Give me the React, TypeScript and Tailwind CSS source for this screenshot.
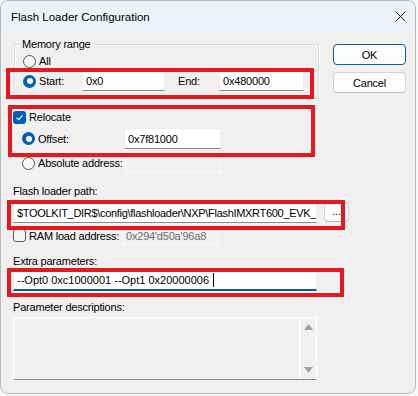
import React from "react";

const font = { fontFamily: '"Liberation Sans", Arial, sans-serif' };

function Radio({ checked }: { checked?: boolean }) {
  return checked ? (
    <span className="w-[13px] h-[13px] rounded-full bg-[#005fb8] flex items-center justify-center shrink-0">
      <span className="w-[6px] h-[6px] rounded-full bg-white" />
    </span>
  ) : (
    <span className="w-[13px] h-[13px] rounded-full border border-[#5a5a5a] bg-[#f6f6f6] shrink-0" />
  );
}

function Check({ checked }: { checked?: boolean }) {
  return checked ? (
    <span className="w-[13px] h-[13px] rounded-[3px] bg-[#005fb8] flex items-center justify-center shrink-0">
      <svg width="9" height="9" viewBox="0 0 9 9">
        <path d="M1.5 4.6 L3.6 6.7 L7.6 2.3" stroke="white" strokeWidth="1.1" fill="none" />
      </svg>
    </span>
  ) : (
    <span className="w-[13px] h-[13px] rounded-[3px] border border-[#5a5a5a] bg-[#f6f6f6] shrink-0" />
  );
}

function Input({ value, className, focused }: { value: string; className: string; focused?: boolean }) {
  return (
    <div
      className={
        "bg-white flex items-center pl-[3px] text-black border border-[#ececec] overflow-hidden " +
        (focused ? "border-b-2 border-b-[#005fb8] " : "border-b-[#8a8a8a] ") +
        className
      }
    >
      <span className="whitespace-nowrap">{value}</span>
      {focused && <span className="w-px h-[14px] bg-black ml-[4px] shrink-0" />}
    </div>
  );
}

function Red({ l, t, w, h }: { l: number; t: number; w: number; h: number }) {
  return (
    <div
      className="absolute border-[4px] border-[#e3191f] pointer-events-none"
      style={{ left: l, top: t, width: w, height: h }}
    />
  );
}

export default function App() {
  return (
    <div className="w-[418px] h-[396px] bg-[#f7f7f7] relative overflow-hidden" style={font}>
      <div className="relative w-[416px] h-[394px] rounded-[8px] border border-[#b9b9b9] bg-[#f0f0f0] overflow-hidden text-[11px] tracking-[-0.2px] text-black leading-[16px]">
        {/* Title bar */}
        <div className="h-[31px] bg-[#eef2f8] flex items-center justify-between pl-[10px] pr-[8px]">
          <span className="text-[11.5px] tracking-normal">Flash Loader Configuration</span>
          <svg width="11" height="11" viewBox="0 0 11 11" className="mr-[1px]">
            <path d="M0.5 0.5 L10.5 10.5 M10.5 0.5 L0.5 10.5" stroke="#1a1a1a" strokeWidth="1" />
          </svg>
        </div>

        {/* Body */}
        <div className="flex pl-[12px]">
          {/* Left column */}
          <div className="w-[306px] shrink-0 flex flex-col">
            {/* Group box */}
            <div className="relative mt-[12px] ml-[1px] border border-[#d9d9d9] shadow-[inset_1px_1px_0_#ffffff,1px_1px_0_#ffffff] pt-[8px] pb-[7px] pl-[8px]">
              <span className="absolute left-[5px] top-[-9px] bg-[#f0f0f0] px-[2px] whitespace-nowrap">Memory range</span>
              <div className="h-[16px] flex items-center gap-[3px]">
                <Radio />
                <span>All</span>
              </div>
              <div className="h-[20px] mt-[2px] flex items-center">
                <Radio checked />
                <span className="ml-[3px] w-[43px] shrink-0">Start:</span>
                <Input value="0x0" className="w-[83px] h-[20px] shrink-0" />
                <span className="ml-[13px] w-[41px] shrink-0">End:</span>
                <Input value="0x480000" className="w-[85px] h-[20px] shrink-0" />
              </div>
            </div>

            <div className="h-[16px] mt-[10px] flex items-center gap-[3px]">
              <Check checked />
              <span>Relocate</span>
            </div>
            <div className="h-[21px] mt-[3px] flex items-center pl-[9px]">
              <Radio checked />
              <span className="ml-[3px] w-[86px] shrink-0">Offset:</span>
              <Input value="0x7f81000" className="w-[97px] h-[21px] shrink-0" />
            </div>
            <div className="h-[20px] mt-[4px] flex items-center pl-[9px]">
              <Radio />
              <span className="ml-[3px] w-[87px] shrink-0 whitespace-nowrap relative z-10">Absolute address:</span>
              <div className="w-[96px] h-[20px] shrink-0 border border-[#fbfbfb] bg-[#f0f0f0]" />
            </div>

            <div className="h-[16px] mt-[10px] whitespace-nowrap">Flash loader path:</div>
            <div className="h-[21px] mt-[3px] flex items-center">
              <Input value="$TOOLKIT_DIR$\config\flashloader\NXP\FlashIMXRT600_EVK_" className="w-[304px] h-[21px] shrink-0 tracking-[-0.3px]" />
              <div className="ml-[7px] w-[25px] h-[19px] shrink-0 rounded-[4px] border border-[#d3d3d3] border-b-[#b8b8b8] bg-[#fbfbfb] flex items-center justify-center leading-none pb-[3px]">
                ...
              </div>
            </div>
            <div className="h-[19px] mt-[3px] flex items-center">
              <Check />
              <span className="ml-[3px] w-[94px] shrink-0 whitespace-nowrap relative z-10">RAM load address:</span>
              <div className="w-[95px] h-[19px] shrink-0 border border-[#fbfbfb] bg-[#f0f0f0] flex items-center pl-[2px] text-[#6d6d6d] whitespace-nowrap">
                0x294'd50a'96a8
              </div>
            </div>

            <div className="h-[16px] mt-[8px] whitespace-nowrap">Extra parameters:</div>
            <Input value="--Opt0 0xc1000001 --Opt1 0x20000006" focused className="w-[304px] h-[21px] mt-[1px] tracking-normal" />

            <div className="h-[16px] mt-[8px] whitespace-nowrap">Parameter descriptions:</div>
            <div className="w-[304px] h-[63px] mt-[2px] flex border border-white border-b-[#8a8a8a] bg-[#f0f0f0]">
              <div className="flex-1" />
              <div className="w-[17px] border-l border-white flex flex-col items-center justify-between pt-[6px] pb-[6px]">
                <svg width="9" height="6" viewBox="0 0 9 6">
                  <path d="M0 6 L4.5 0 L9 6 Z" fill="#a3a3a3" />
                </svg>
                <svg width="9" height="6" viewBox="0 0 9 6">
                  <path d="M0 0 L4.5 6 L9 0 Z" fill="#a3a3a3" />
                </svg>
              </div>
            </div>
          </div>

          {/* Right column */}
          <div className="ml-[14px] w-[73px] flex flex-col">
            <div className="mt-[12px] h-[21px] rounded-[4px] border border-[#005fb8] bg-[#fdfdfd] flex items-center justify-center">
              OK
            </div>
            <div className="mt-[7px] h-[21px] rounded-[4px] border border-[#d3d3d3] border-b-[#b8b8b8] bg-[#fdfdfd] flex items-center justify-center">
              Cancel
            </div>
          </div>
        </div>

        <Red l={5} t={67} w={308} h={31} />
        <Red l={7} t={104} w={307} h={52} />
        <Red l={6} t={199} w={338} h={30} />
        <Red l={6} t={267} w={337} h={29} />
      </div>
    </div>
  );
}
